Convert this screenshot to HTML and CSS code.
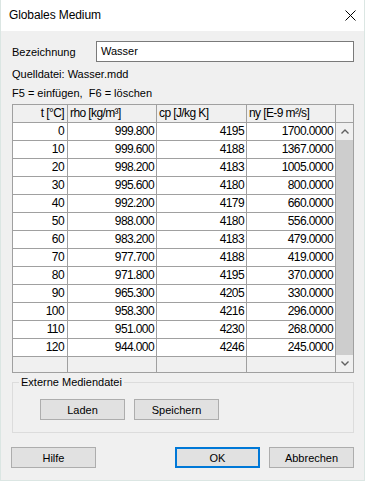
FILE: index.html
```html
<!DOCTYPE html>
<html lang="de">
<head>
<meta charset="UTF-8">
<title>Globales Medium</title>
<link rel="stylesheet" href="styles.css">
</head>
<body>
<div class="dialog">
  <div class="titlebar">
    <span class="title">Globales Medium</span>
    <svg class="close-icon" width="11" height="11" viewBox="0 0 11 11"><path d="M0.5 0.5L10.5 10.5M10.5 0.5L0.5 10.5" stroke="#000" stroke-width="1" fill="none"/></svg>
  </div>

  <div class="content">
    <div class="name-row">
      <label for="name">Bezeichnung</label>
      <div class="textbox" id="name">Wasser</div>
    </div>
    <div class="info">Quelldatei: Wasser.mdd</div>
    <div class="info info-keys">F5 = einfügen,&nbsp; F6 = löschen</div>

    <!-- Medium table -->
    <div class="grid">
      <div class="cell head right">t [°C]</div>
      <div class="cell head">rho [kg/m³]</div>
      <div class="cell head">cp [J/kg K]</div>
      <div class="cell head">ny [E-9 m²/s]</div>
      <div class="cell head"></div>

      <div class="scrollbar">
        <div class="scroll-btn"><svg width="8" height="5" viewBox="0 0 8 5"><path d="M0.5 4.5L4 1L7.5 4.5" stroke="#606060" stroke-width="1.4" fill="none"/></svg></div>
        <div class="scroll-thumb"></div>
        <div class="scroll-btn"><svg width="8" height="5" viewBox="0 0 8 5"><path d="M0.5 0.5L4 4L7.5 0.5" stroke="#606060" stroke-width="1.4" fill="none"/></svg></div>
      </div>

      <div class="cell num first">0</div><div class="cell num">999.800</div><div class="cell num">4195</div><div class="cell num">1700.0000</div>
      <div class="cell num first">10</div><div class="cell num">999.600</div><div class="cell num">4188</div><div class="cell num">1367.0000</div>
      <div class="cell num first">20</div><div class="cell num">998.200</div><div class="cell num">4183</div><div class="cell num">1005.0000</div>
      <div class="cell num first">30</div><div class="cell num">995.600</div><div class="cell num">4180</div><div class="cell num">800.0000</div>
      <div class="cell num first">40</div><div class="cell num">992.200</div><div class="cell num">4179</div><div class="cell num">660.0000</div>
      <div class="cell num first">50</div><div class="cell num">988.000</div><div class="cell num">4180</div><div class="cell num">556.0000</div>
      <div class="cell num first">60</div><div class="cell num">983.200</div><div class="cell num">4183</div><div class="cell num">479.0000</div>
      <div class="cell num first">70</div><div class="cell num">977.700</div><div class="cell num">4188</div><div class="cell num">419.0000</div>
      <div class="cell num first">80</div><div class="cell num">971.800</div><div class="cell num">4195</div><div class="cell num">370.0000</div>
      <div class="cell num first">90</div><div class="cell num">965.300</div><div class="cell num">4205</div><div class="cell num">330.0000</div>
      <div class="cell num first">100</div><div class="cell num">958.300</div><div class="cell num">4216</div><div class="cell num">296.0000</div>
      <div class="cell num first">110</div><div class="cell num">951.000</div><div class="cell num">4230</div><div class="cell num">268.0000</div>
      <div class="cell num first">120</div><div class="cell num">944.000</div><div class="cell num">4246</div><div class="cell num">245.0000</div>

      <div class="cell empty"></div><div class="cell empty"></div><div class="cell empty"></div><div class="cell empty"></div>
    </div>

    <fieldset class="group">
      <legend>Externe Mediendatei</legend>
      <div class="group-buttons">
        <button class="btn">Laden</button>
        <button class="btn">Speichern</button>
      </div>
    </fieldset>

    <div class="footer">
      <button class="btn btn-help">Hilfe</button>
      <button class="btn btn-default">OK</button>
      <button class="btn">Abbrechen</button>
    </div>
  </div>
</div>
</body>
</html>
```

FILE: styles.css
```css
body {
  margin: 0;
  background-color: #f0f0f0;
}
.dialog {
  width: 365px;
  height: 481px;
  box-sizing: border-box;
  border: 1px solid #dbe6e3;
  border-top: none;
  background-color: #f0f0f0;
  font-family: "Liberation Sans", Arial, sans-serif;
  font-size: 11px;
  color: #000;
}
.titlebar {
  height: 31px;
  background-color: #fff;
  display: flex;
  align-items: center;
  justify-content: space-between;
  padding: 0 8px 1px 8px;
  box-sizing: border-box;
}
.title {
  font-size: 12px;
  letter-spacing: -0.1px;
}
.content {
  padding: 10px 10px 0 11px;
}
.name-row {
  display: flex;
  align-items: center;
  height: 21px;
}
.name-row label {
  width: 84px;
}
.textbox {
  flex: 1;
  height: 21px;
  box-sizing: border-box;
  border: 1px solid #7a7a7a;
  background-color: #fff;
  padding-left: 4px;
  line-height: 19px;
}
.info {
  line-height: 15px;
  margin-top: 5px;
}
.info-keys {
  margin-top: 4px;
}
/* Table */
.grid {
  margin-top: 3px;
  display: grid;
  grid-template-columns: 55px 89px 90px 89px 18px;
  grid-template-rows: 18px repeat(13, 18px) 16px;
  width: 342px;
  box-sizing: border-box;
  border-top: 1px solid #a0a0a0;
  border-left: 1px solid #a0a0a0;
  font-size: 12px;
  letter-spacing: -0.6px;
}
.cell {
  box-sizing: border-box;
  border-right: 1px solid #a0a0a0;
  border-bottom: 1px solid #a0a0a0;
  background-color: #fff;
  line-height: 17px;
  white-space: nowrap;
  overflow: hidden;
}
.head {
  background-color: #f0f0f0;
  padding-left: 2px;
}
.head.right {
  text-align: right;
  padding: 0 3px 0 0;
}
.num {
  text-align: right;
  padding-right: 2px;
}
.num.first {
  padding-right: 3px;
}
.empty {
  background-color: #f0f0f0;
}
.scrollbar {
  grid-column: 5;
  grid-row: 2 / span 14;
  display: flex;
  flex-direction: column;
  box-sizing: border-box;
  border-right: 1px solid #a0a0a0;
  border-bottom: 1px solid #a0a0a0;
  background-color: #f0f0f0;
}
.scroll-btn {
  height: 17px;
  display: flex;
  align-items: center;
  justify-content: center;
}
.scroll-thumb {
  flex: 1;
  background-color: #cdcdcd;
}
/* Group box */
.group {
  margin: 3px 0 0;
  padding: 0;
  width: 342px;
  box-sizing: border-box;
  border: 1px solid #dcdcdc;
  min-width: 0;
}
.group legend {
  margin-left: 6px;
  padding: 0 2px;
  line-height: 13px;
}
.group-buttons {
  display: flex;
  gap: 9px;
  padding: 10px 0 12px 27px;
}
/* Buttons */
.btn {
  width: 85px;
  height: 21px;
  box-sizing: border-box;
  border: 1px solid #adadad;
  background-color: #e1e1e1;
  font-family: "Liberation Sans", Arial, sans-serif;
  font-size: 11px;
  color: #000;
  padding: 0;
}
.footer {
  display: flex;
  gap: 9px;
  margin-top: 14px;
  width: 342px;
}
.btn-help {
  margin-left: -1px;
  margin-right: auto;
}
.btn-default {
  border: 2px solid #0078d7;
}
```
